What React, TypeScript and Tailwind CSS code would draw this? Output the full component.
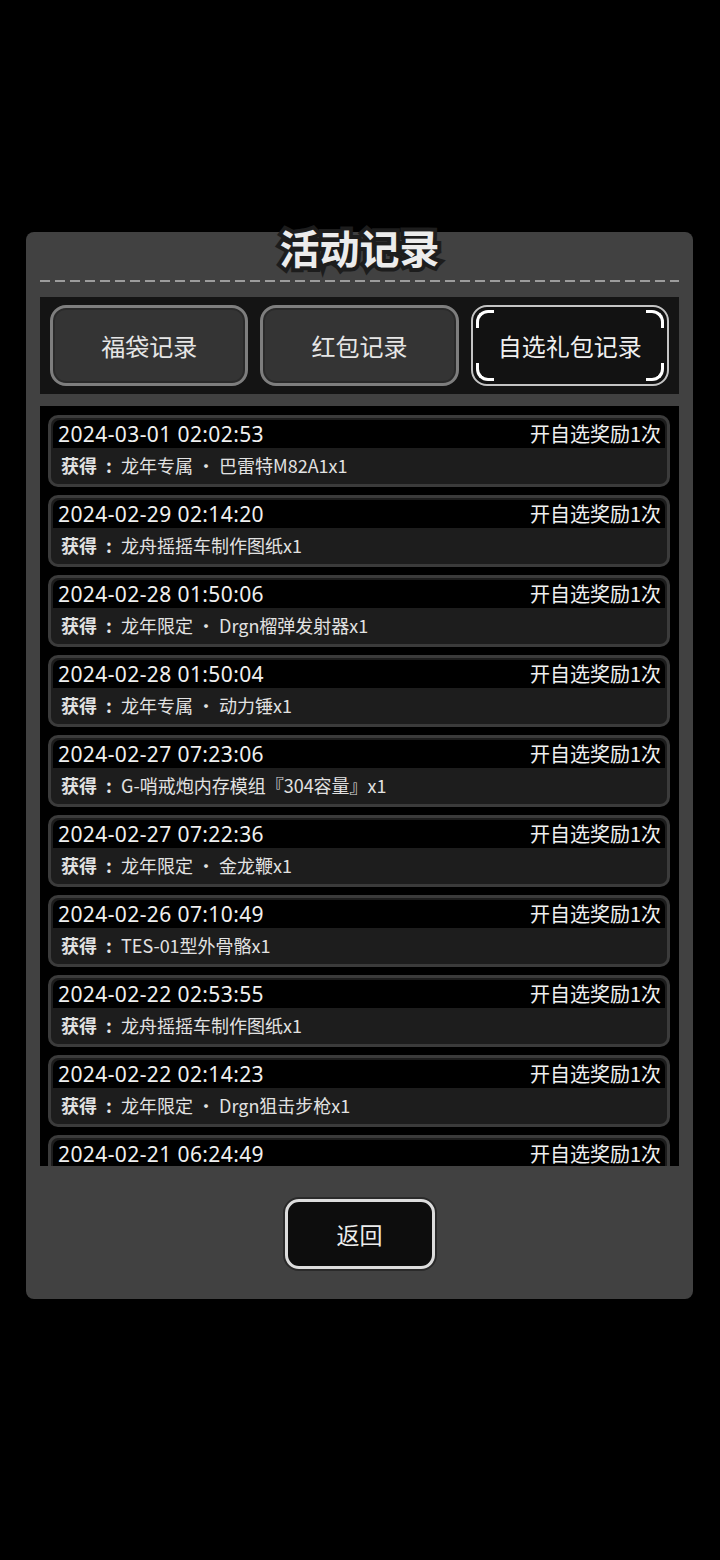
import { Fragment } from "react";

type Record = {
  time: string;
  item: string;
};

const RECORDS: Record[] = [
  { time: "2024-03-01 02:02:53", item: "龙年专属 · 巴雷特M82A1x1" },
  { time: "2024-02-29 02:14:20", item: "龙舟摇摇车制作图纸x1" },
  { time: "2024-02-28 01:50:06", item: "龙年限定 · Drgn榴弹发射器x1" },
  { time: "2024-02-28 01:50:04", item: "龙年专属 · 动力锤x1" },
  { time: "2024-02-27 07:23:06", item: "G-哨戒炮内存模组『304容量』x1" },
  { time: "2024-02-27 07:22:36", item: "龙年限定 · 金龙鞭x1" },
  { time: "2024-02-26 07:10:49", item: "TES-01型外骨骼x1" },
  { time: "2024-02-22 02:53:55", item: "龙舟摇摇车制作图纸x1" },
  { time: "2024-02-22 02:14:23", item: "龙年限定 · Drgn狙击步枪x1" },
  { time: "2024-02-21 06:24:49", item: "龙年专属 · 巴雷特M82A1x1" },
];

const TABS = ["福袋记录", "红包记录", "自选礼包记录"];
const ACTIVE_TAB = 2;

export default function App() {
  return (
    <div className="min-h-[1560px] bg-black pt-[232px] font-['Noto_Sans','Noto_Sans_CJK_SC',sans-serif] text-[#e8e8e8]">
      <div className="mx-[26px] flex h-[1067px] w-[667px] flex-col rounded-[8px] bg-[#414141]">
        {/* header */}
        <div className="flex h-[48px] items-start justify-center">
          <h1 className="-mt-[9px] font-['Noto_Sans_CJK_SC',sans-serif] text-[40px] font-bold leading-[48px] text-[#ececec] [-webkit-text-stroke:8px_#1d1d1d] [paint-order:stroke_fill]">
            活动记录
          </h1>
        </div>
        <div className="mx-[14px] h-[2px] bg-[linear-gradient(to_right,#9c9c9c_10px,transparent_10px)] bg-[length:15px_2px]" />

        {/* tabs */}
        <div className="mx-[14px] mt-[15px] grid h-[97px] grid-cols-3 gap-[12px] bg-[#141414] px-[10px] py-[8px]">
          {TABS.map((tab, index) => (
            <Tab key={tab} label={tab} active={index === ACTIVE_TAB} />
          ))}
        </div>

        {/* list */}
        <div className="mx-[14px] mt-[12px] flex h-[760px] flex-col gap-[8px] overflow-hidden bg-black pl-[8px] pr-[9px] pt-[9px]">
          {RECORDS.map((r, index) => (
            <Fragment key={index}>
              <RecordRow record={r} />
            </Fragment>
          ))}
        </div>

        {/* footer */}
        <div className="flex flex-1 items-start justify-center pt-[31px]">
          <button className="h-[74px] w-[154px] rounded-[16px] border-[2px] border-[#2a2a2a] bg-[#1a1a1a] p-0">
            <span className="flex h-full w-full items-center justify-center rounded-[14px] border-[3px] border-[#dcdcdc] bg-[#0d0d0d] font-['Noto_Sans_CJK_SC',sans-serif] text-[23px] text-[#ececec]">
              返回
            </span>
          </button>
        </div>
      </div>
    </div>
  );
}

function Tab({ label, active }: { label: string; active: boolean }) {
  if (active) {
    return (
      <div className="relative flex items-center justify-center rounded-[16px] border-[2px] border-[#c4c4c4] bg-[#121212]">
        <span className="pointer-events-none absolute left-[3px] top-[3px] h-[18px] w-[18px] rounded-tl-[12px] border-l-[3px] border-t-[3px] border-white" />
        <span className="pointer-events-none absolute right-[3px] top-[3px] h-[18px] w-[18px] rounded-tr-[12px] border-r-[3px] border-t-[3px] border-white" />
        <span className="pointer-events-none absolute bottom-[3px] left-[3px] h-[18px] w-[18px] rounded-bl-[12px] border-b-[3px] border-l-[3px] border-white" />
        <span className="pointer-events-none absolute bottom-[3px] right-[3px] h-[18px] w-[18px] rounded-br-[12px] border-b-[3px] border-r-[3px] border-white" />
        <span className="font-['Noto_Sans_CJK_SC',sans-serif] text-[24px] text-[#f0f0f0]">{label}</span>
      </div>
    );
  }
  return (
    <div className="flex items-center justify-center rounded-[16px] border-[3px] border-[#7e7e7e] bg-[#343434] shadow-[inset_0_0_0_2px_#2a2a2a]">
      <span className="font-['Noto_Sans_CJK_SC',sans-serif] text-[24px] text-[#e6e6e6]">{label}</span>
    </div>
  );
}

function RecordRow({ record }: { record: Record }) {
  return (
    <div className="h-[72px] shrink-0 rounded-[10px] border-[3px] border-[#3b3b3b] bg-[#1d1d1d] px-[2px] pt-[2px]">
      <div className="flex h-[28px] items-center justify-between rounded-t-[7px] bg-black pl-[5px] pr-[4px] leading-none text-[#f0f0f0]">
        <span className="text-[21px] tracking-[0.4px]">{record.time}</span>
        <span className="font-['Noto_Sans_CJK_SC',sans-serif] text-[20px]">开自选奖励1次</span>
      </div>
      <div className="flex h-[34px] items-center px-[8px] font-['Noto_Sans_CJK_SC',sans-serif] text-[18px] leading-none text-[#e2e2e2]">
        <span className="font-bold">获得</span>
        <span className="w-[24px] text-center font-bold">:</span>
        <span>{record.item}</span>
      </div>
    </div>
  );
}
